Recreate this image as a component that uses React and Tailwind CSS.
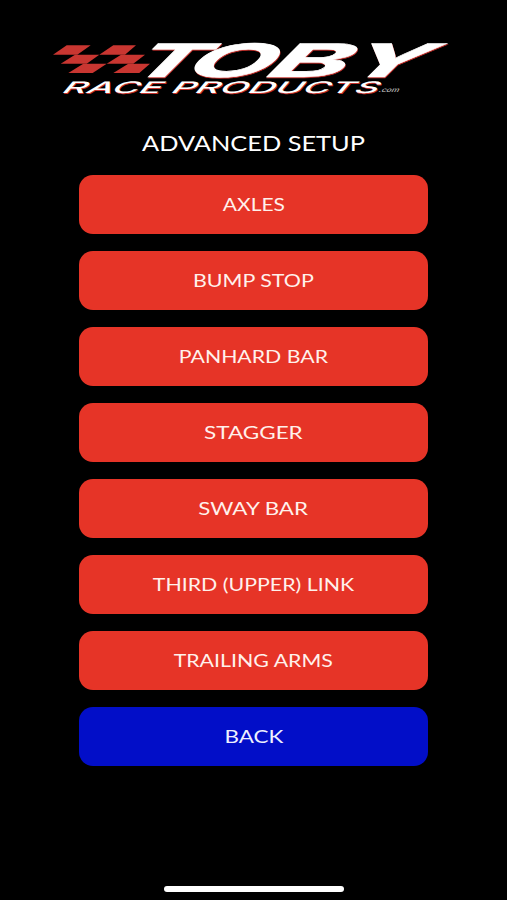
const items = [
  { label: "AXLES", stretch: "scale-x-[1.2]" },
  { label: "BUMP STOP", stretch: "scale-x-[1.225]" },
  { label: "PANHARD BAR", stretch: "scale-x-[1.215]" },
  { label: "STAGGER", stretch: "scale-x-[1.285]" },
  { label: "SWAY BAR", stretch: "scale-x-[1.275]" },
  { label: "THIRD (UPPER) LINK", stretch: "scale-x-[1.22]" },
  { label: "TRAILING ARMS", stretch: "scale-x-[1.22]" },
  { label: "BACK", stretch: "scale-x-[1.28]", back: true },
];

// each wordmark letter is stretched and slanted on its own
const letters = [
  { ch: "T", x: 121, sx: 2.3 },
  { ch: "O", x: 178, sx: 2.4 },
  { ch: "B", x: 259, sx: 2.6 },
  { ch: "Y", x: 336, sx: 2.38 },
];

const Wordmark = ({ fill }) => (
  <g fill={fill}>
    {letters.map((l) => (
      <text
        key={l.ch}
        transform={`translate(${l.x} 76.5) skewX(-45) scale(${l.sx} 1)`}
        fontSize="46"
        fontWeight="700"
        stroke={fill}
        strokeWidth="0.6"
      >
        {l.ch}
      </text>
    ))}
    <text transform="translate(60 92.5) skewX(-40) scale(2.33 1)" fontSize="16" fontWeight="500">
      RACE PRODUCTS
    </text>
  </g>
);

const Logo = () => (
  <svg className="block h-[110px] w-full font-['Inter',sans-serif]" viewBox="0 0 507 110">
    <g fill="#c93631">
      <path d="M66.7 45.3H90.7L77.3 54.7H53Z" />
      <path d="M113.3 45.3H136L125 54.7H99.3Z" />
      <path d="M75 54.7H99.3L86.7 63.7H60.7Z" />
      <path d="M121 54.7H145L133.3 63.7H106.7Z" />
      <path d="M83.3 63.7H106.7L92.7 72.9H68.3Z" />
      <path d="M128.3 63.7H150L139.3 72.9H113.3Z" />
    </g>
    <g transform="translate(0.6 1.2)">
      <Wordmark fill="#c4302b" />
    </g>
    <Wordmark fill="#fff" />
    <text transform="translate(378 91.5) skewX(-30) scale(1.3 1)" fontSize="6.5" fontWeight="600" fill="#aaa">
      .com
    </text>
  </svg>
);

export default function App() {
  return (
    <div className="flex h-[900px] w-[507px] flex-col items-center overflow-hidden bg-black font-['Lato',sans-serif] text-white">
      <Logo />
      <h1 className="mt-[19px] h-[28px] text-[21.5px] leading-[28px] whitespace-nowrap">
        <span className="inline-block scale-x-[1.18]">ADVANCED SETUP</span>
      </h1>
      <div className="mt-[18px] flex w-[349px] flex-col gap-[17px]">
        {items.map((item) => (
          <button
            key={item.label}
            className={`flex h-[59px] items-center justify-center rounded-[14px] pt-[2px] text-[17.5px] whitespace-nowrap ${
              item.back ? "bg-[#020ec8] text-[#eef0ff]" : "bg-[#e63427] text-[#fff1ec]"
            }`}
          >
            <span className={`inline-block ${item.stretch}`}>{item.label}</span>
          </button>
        ))}
      </div>
      <div className="mt-auto mb-[8px] h-[6px] w-[180px] rounded-full bg-white" />
    </div>
  );
}
